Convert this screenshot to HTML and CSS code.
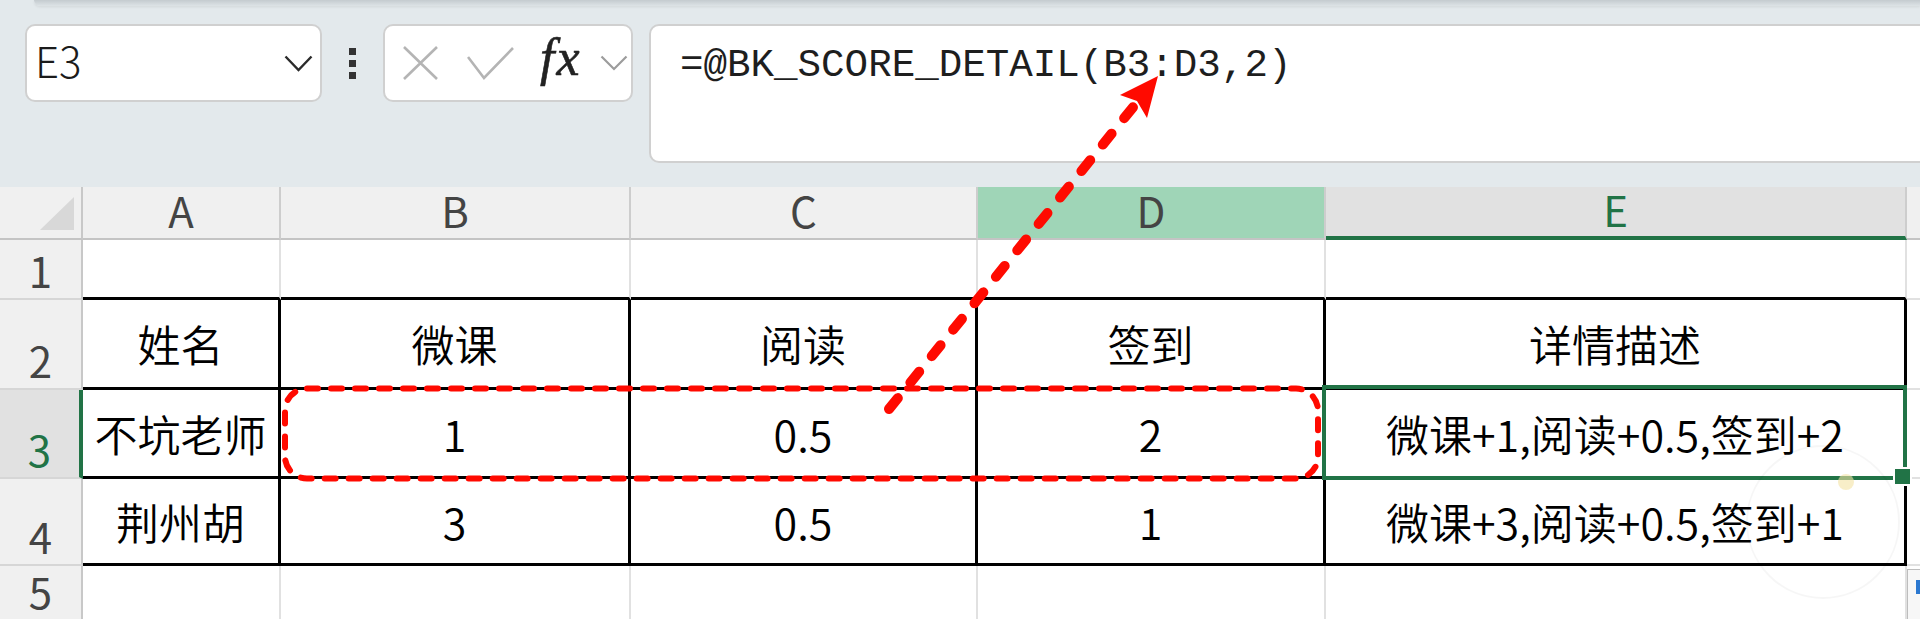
FILE: index.html
```html
<!DOCTYPE html>
<html lang="zh-CN">
<head>
<meta charset="utf-8">
<title>Excel - BK_SCORE_DETAIL</title>
<link rel="stylesheet" href="styles.css">
</head>
<body>
<div class="toparea">
  <div class="ribbon-edge"></div>
  <div class="formula-row">
    <div class="namebox">
      <span class="cellref">E3</span>
      <svg class="chev" width="29" height="17" viewBox="0 0 29 17"><path d="M1.5 1.5 L14.5 15 L27.5 1.5" fill="none" stroke="#2b2b2b" stroke-width="2.4"/></svg>
    </div>
    <div class="vdots"><i></i><i></i><i></i></div>
    <div class="fxbox">
      <svg class="icon-x" width="35" height="34" viewBox="0 0 35 34"><path d="M1 1 L34 33 M34 1 L1 33" fill="none" stroke="#b4b4b4" stroke-width="2.6"/></svg>
      <svg class="icon-check" width="47" height="33" viewBox="0 0 47 33"><path d="M1 10 L17 31 L46 1" fill="none" stroke="#b4b4b4" stroke-width="2.6"/></svg>
      <span class="fx">fx</span>
      <svg class="chev-sm" width="28" height="16" viewBox="0 0 28 16"><path d="M1.5 1.5 L14 14 L26.5 1.5" fill="none" stroke="#9c9c9c" stroke-width="2.2"/></svg>
    </div>
    <div class="formula"><span class="ftext">=@BK_SCORE_DETAIL(B3:D3,2)</span></div>
  </div>
</div>

<div class="sheet">
  <!-- header row -->
  <div class="corner"><svg width="34" height="33" viewBox="0 0 34 33"><polygon points="34,0 34,33 0,33" fill="#d8d8d8"/></svg></div>
  <div class="ch">A</div>
  <div class="ch">B</div>
  <div class="ch">C</div>
  <div class="ch hl">D</div>
  <div class="ch act">E</div>
  <div class="ch last"></div>

  <!-- row 1 -->
  <div class="rh">1</div>
  <div class="c tt"></div>
  <div class="c tt"></div>
  <div class="c tt"></div>
  <div class="c tt"></div>
  <div class="c tt"></div>
  <div class="c f"></div>

  <!-- row 2 -->
  <div class="rh">2</div>
  <div class="c t">姓名</div>
  <div class="c t">微课</div>
  <div class="c t">阅读</div>
  <div class="c t">签到</div>
  <div class="c t">详情描述</div>
  <div class="c f"></div>

  <!-- row 3 -->
  <div class="rh act">3</div>
  <div class="c t">不坑老师</div>
  <div class="c t">1</div>
  <div class="c t">0.5</div>
  <div class="c t">2</div>
  <div class="c t">微课+1,阅读+0.5,签到+2</div>
  <div class="c f"></div>

  <!-- row 4 -->
  <div class="rh">4</div>
  <div class="c t">荆州胡</div>
  <div class="c t">3</div>
  <div class="c t">0.5</div>
  <div class="c t">1</div>
  <div class="c t">微课+3,阅读+0.5,签到+1</div>
  <div class="c f"></div>

  <!-- row 5 -->
  <div class="rh">5</div>
  <div class="c"></div>
  <div class="c"></div>
  <div class="c"></div>
  <div class="c"></div>
  <div class="c"></div>
  <div class="c f"></div>

  <div class="selection"></div>
  <div class="fill-handle"></div>
</div>

<div class="paste-tag"><span class="pt-blue"></span></div>

<svg class="annot" width="1920" height="619" viewBox="0 0 1920 619">
  <circle cx="1823" cy="522" r="76" fill="none" stroke="rgba(0,0,0,0.035)" stroke-width="2"/>
  <circle cx="1846" cy="482" r="8" fill="#f4e3a3" opacity="0.6"/>
  <rect class="dash-rect" x="285" y="388.5" width="1033" height="90" rx="22" ry="22"/>
  <line class="dash-arrow" x1="889" y1="409" x2="1134" y2="106"/>
  <polygon class="arrow-head" points="1158,76 1120,95 1137,101 1147,118"/>
</svg>
</body>
</html>
```

FILE: styles.css
```css
* {
  box-sizing: border-box;
  margin: 0;
  padding: 0;
}

html,
body {
  width: 1920px;
  height: 619px;
  overflow: hidden;
}

body {
  position: relative;
  background: #e3e9ec;
  font-family: "Noto Sans CJK SC", "Noto Sans", sans-serif;
}

/* ---------- formula bar area ---------- */
.toparea {
  height: 187px;
  display: flex;
  flex-direction: column;
}

.ribbon-edge {
  height: 6px;
  margin-left: 34px;
  background: linear-gradient(#c4cbcf, #dde3e6);
  border-bottom-left-radius: 8px;
  box-shadow: 0 1px 3px rgba(0, 0, 0, 0.08);
}

.formula-row {
  display: flex;
  align-items: flex-start;
  padding: 18px 0 0 25px;
}

.namebox {
  width: 297px;
  height: 78px;
  background: #fff;
  border: 2px solid #d0d0d0;
  border-radius: 10px;
  display: flex;
  align-items: center;
  justify-content: space-between;
  padding: 0 7px 6px 8px;
}

.cellref {
  font-size: 42px;
  line-height: 1;
  color: #1b1b1b;
  font-weight: 300;
}

.chev {
  display: block;
  margin-top: 6px;
}

.vdots {
  display: flex;
  flex-direction: column;
  gap: 5px;
  width: 8px;
  margin: 24px 0 0 27px;
}

.vdots i {
  display: block;
  width: 7px;
  height: 7px;
  background: #333;
}

.fxbox {
  width: 250px;
  height: 78px;
  margin-left: 26px;
  background: #fff;
  border: 2px solid #d0d0d0;
  border-radius: 10px;
  display: flex;
  align-items: center;
  padding-left: 18px;
}

.icon-x {
  display: block;
  margin-right: 29px;
}

.icon-check {
  display: block;
  margin-right: 26px;
}

.fx {
  display: block;
  width: 43px;
  margin-right: 17px;
  margin-bottom: 10px;
  font-family: "Liberation Serif", serif;
  font-style: italic;
  font-size: 52px;
  line-height: 1;
  color: #222;
  letter-spacing: 2px;
  -webkit-text-stroke: 0.6px #222;
}

.chev-sm {
  display: block;
}

.formula {
  flex: 1;
  height: 139px;
  margin-left: 16px;
  margin-right: -20px;
  background: #fff;
  border: 2px solid #d0d0d0;
  border-radius: 10px;
  padding: 20px 0 0 29px;
}

.ftext {
  font-family: "Liberation Mono", "DejaVu Sans Mono", monospace;
  font-size: 39.2px;
  line-height: 1;
  color: #1e1e1e;
  white-space: pre;
}

/* ---------- sheet grid ---------- */
.sheet {
  position: relative;
  display: grid;
  grid-template-columns: 83px 198px 350px 347px 348px 581px 13px;
  grid-template-rows: 53px 60px 90px 89px 87px 55px;
  background: #fff;
}

.corner {
  background: #f0f0f0;
  border-right: 2px solid #c8c8c8;
  border-bottom: 2px solid #c4c4c4;
  display: flex;
  justify-content: flex-end;
  align-items: flex-end;
  padding: 0 7px 8px 0;
}

.corner svg {
  display: block;
}

.ch {
  background: #f0f0f0;
  border-right: 2px solid #cdcdcd;
  border-bottom: 2px solid #c4c4c4;
  display: flex;
  align-items: center;
  justify-content: center;
  padding-bottom: 6px;
  font-size: 42px;
  line-height: 1;
  color: #444;
}

.ch.hl {
  background: #9fd5b7;
}

.ch.act {
  background: #e1e1e1;
  color: #217346;
  border-bottom: 4px solid #217346;
}

.ch.last {
  border-right: none;
}

.rh {
  background: #f0f0f0;
  border-right: 2px solid #c8c8c8;
  border-bottom: 2px solid #d6d6d6;
  display: flex;
  align-items: flex-end;
  justify-content: center;
  padding-bottom: 7px;
  font-size: 42px;
  line-height: 1;
  color: #444;
}

.rh.act {
  background: #e1e1e1;
  color: #217346;
  border-right: 4px solid #217346;
}

.c {
  border-right: 2px solid #e1e1e1;
  border-bottom: 2px solid #e1e1e1;
  display: flex;
  align-items: center;
  justify-content: center;
  font-size: 43px;
  font-weight: 350;
  line-height: 1;
  color: #000;
  white-space: nowrap;
}

.c.tt {
  border-bottom: 3px solid #000;
}

.c.t {
  border-right: 3px solid #000;
  border-bottom: 3px solid #000;
}

.c.f {
  border-right: none;
}

.selection {
  position: absolute;
  left: 1322px;
  top: 198px;
  width: 585px;
  height: 95px;
  border: 4px solid #217346;
}

.fill-handle {
  position: absolute;
  left: 1893px;
  top: 280px;
  width: 19px;
  height: 19px;
  background: #217346;
  border: 2px solid #fff;
}

.paste-tag {
  position: absolute;
  left: 1907px;
  top: 569px;
  width: 24px;
  height: 60px;
  background: #f7f7f7;
  border: 1px solid #bdbdbd;
}

.pt-blue {
  position: absolute;
  left: 8px;
  top: 10px;
  width: 12px;
  height: 14px;
  background: #2b78d0;
}

/* ---------- annotation overlay ---------- */
.annot {
  position: absolute;
  left: 0;
  top: 0;
  pointer-events: none;
}

.dash-rect {
  fill: none;
  stroke: #ff0a00;
  stroke-width: 6;
  stroke-linecap: round;
  stroke-dasharray: 11 13;
}

.dash-arrow {
  stroke: #ff0a00;
  stroke-width: 10;
  stroke-linecap: round;
  stroke-dasharray: 14 20;
}

.arrow-head {
  fill: #ff0a00;
}
```
